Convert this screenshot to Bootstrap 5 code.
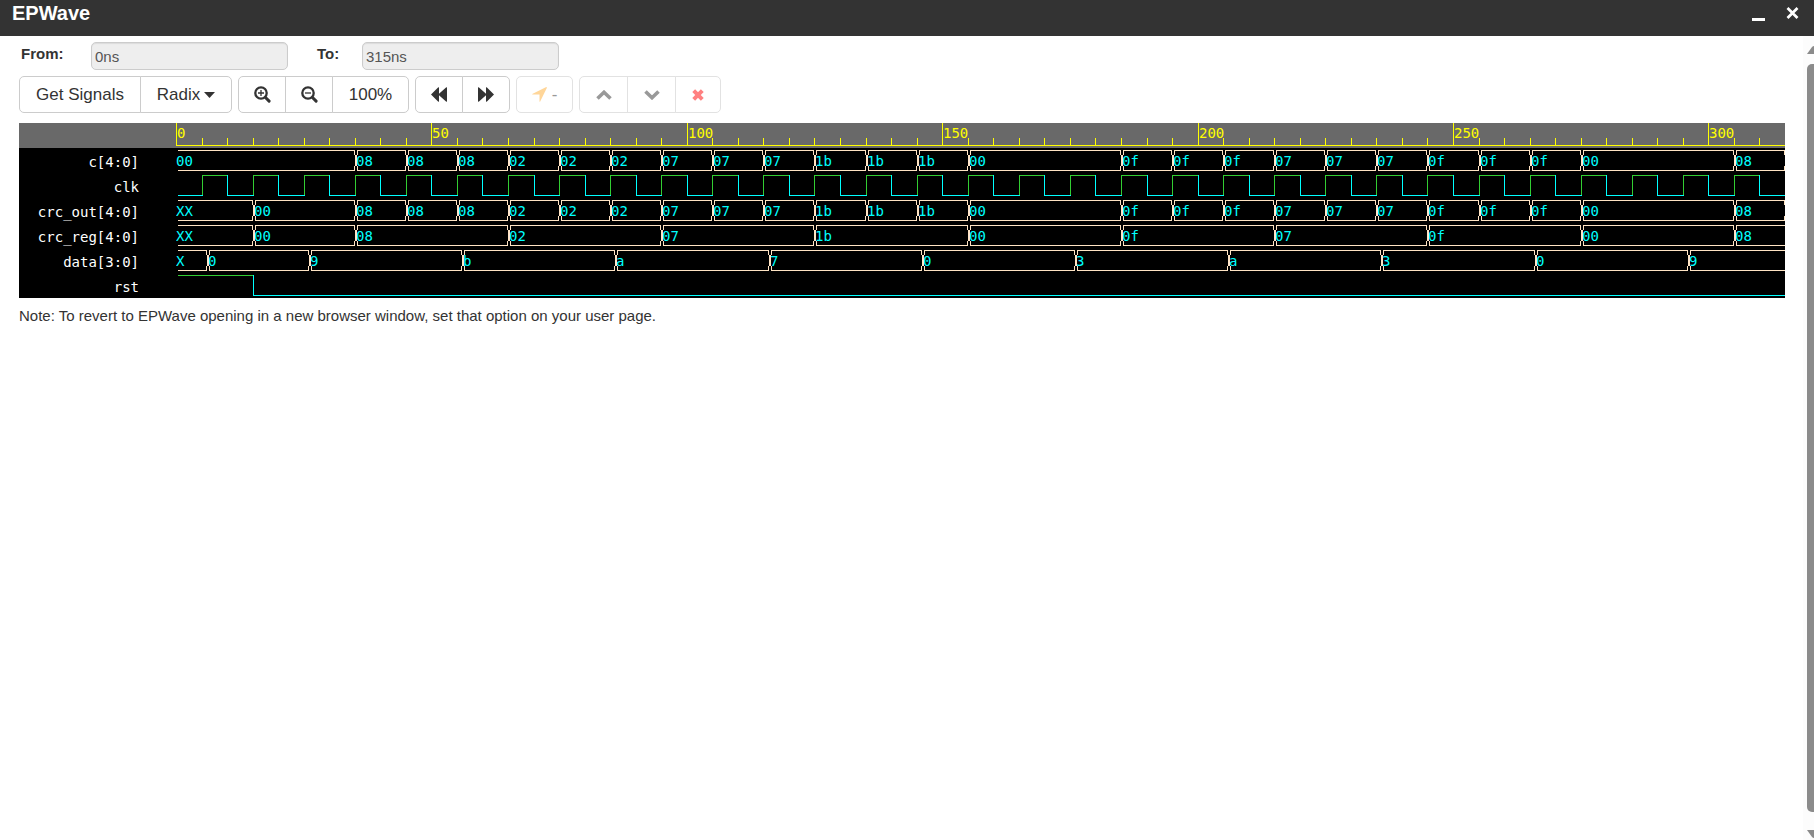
<!DOCTYPE html>
<html lang="en">
<head>
<meta charset="utf-8">
<meta name="viewport" content="width=device-width, initial-scale=1">
<title>EPWave</title>
<link href="https://cdn.jsdelivr.net/npm/bootstrap@5.3.0/dist/css/bootstrap.min.css" rel="stylesheet">
<style>
  body { font-family: "Liberation Sans", Arial, sans-serif; font-size: 15px; line-height: 20px; color: #333; background: #fff; }
  .title-bar { background: #333; color: #fff; height: 36px; padding: 0 15px 0 12px; }
  .title-bar h1 { font-size: 20px; font-weight: 700; line-height: 26px; margin: 0; }
  .title-bar button { background: none; border: 0; padding: 0; color: #fff; line-height: 0; }
  .viewer { padding: 6px 18px 0 19px; }
  .range-row { padding-left: 2px; height: 28px; }
  .range-row label { font-weight: 700; height: 24px; line-height: 24px; }
  .from-label { width: 70px; }
  .to-label { width: 45px; margin-left: 29px; }
  .time-box.form-control { width: 197px; height: 28px; padding: 0 3px; font-size: 15px; line-height: 20px; color: #555; background: #eee; border: 1px solid #ccc; border-radius: 5px; box-shadow: inset 0 1px 1px rgba(0,0,0,.08); }
  .tool-row { margin: 6px 0 10px; gap: 6px; }
  .tool-row .btn { height: 37px; padding: 0; font-size: 17px; line-height: 20px; color: #333; background: #fff; border: 1px solid #ccc; border-radius: 5px; display: inline-flex; align-items: center; justify-content: center; flex: none; }
  .tool-row .btn:disabled { color: #999; border-color: #e2e2e2; opacity: 1; }
  .w-signals { width: 122px; }
  .w-radix { width: 92px; gap: 4px; }
  .w-icon { width: 48px; }
  .w-zoom { width: 77px; }
  .w-mark { width: 57px; gap: 5px; }
  .w-move { width: 49px; }
  .w-remove { width: 46px; }
  .wave { background: #000; font-family: "DejaVu Sans Mono", monospace; font-size: 14px; }
  .wave-row { height: 25px; }
  .wave-row.ruler { background: #696969; }
  .wave-name { width: 157px; padding: 3px 37px 0 0; line-height: 22px; color: #fff; text-align: right; flex: none; }
  .wave-row svg { flex: 1 1 0; min-width: 0; height: 25px; display: block; overflow: hidden; }
  .wave path { fill: none; stroke-width: 1; shape-rendering: crispEdges; }
  .tick { stroke: #ff0; }
  .tick-text { fill: #ff0; }
  .bus { stroke: #ffe4c4; }
  .bus-text { fill: #0ff; }
  .high { stroke: #32cd32; }
  .low { stroke: #0ff; }
  .scroll-track { width: 11px; background: #fcfcfc; padding: 10px 0 2px 4px; overflow: hidden; }
  .scroll-track svg { display: block; flex: none; }
  .scroll-thumb { background: #8b8b8b; border-radius: 5px 0 0 5px; margin: 10px 0 18px; }
</style>
</head>
<body>
<div class="d-flex flex-column min-vh-100">
  <header class="title-bar d-flex justify-content-between">
    <h1>EPWave</h1>
    <div class="d-flex align-items-start gap-3">
      <button type="button" aria-label="Minimize"><svg width="18" height="26"><path d="M0 19.5h13" stroke="#fff" stroke-width="3"/></svg></button>
      <button type="button" aria-label="Close"><svg width="13" height="26"><path d="M1.500 8l10 10m0-10l-10 10" stroke="#fff" stroke-width="2.700"/></svg></button>
    </div>
  </header>
  <div class="d-flex flex-fill">
    <main class="viewer flex-fill">
      <form class="range-row d-flex">
        <label class="from-label" for="from">From:</label>
        <input class="form-control time-box" id="from" type="text" value="0ns" readonly>
        <label class="to-label" for="to">To:</label>
        <input class="form-control time-box" id="to" type="text" value="315ns" readonly>
      </form>
      <div class="tool-row d-flex flex-wrap">
        <div class="btn-group">
          <button type="button" class="btn w-signals">Get Signals</button>
          <button type="button" class="btn w-radix">Radix <svg width="11" height="6"><path d="M0 0h11L5.500 6z" fill="#333"/></svg></button>
        </div>
        <div class="btn-group">
          <button type="button" class="btn w-icon" aria-label="Zoom in"><svg width="17" height="17" fill="none" stroke="#333"><circle cx="7" cy="7" r="5.7" stroke-width="2.3"/><path d="M11.5 11.5l3.6 3.6" stroke-width="3" stroke-linecap="round"/><path d="M4 7h6M7 4v6" stroke-width="1.3"/></svg></button>
          <button type="button" class="btn w-icon" aria-label="Zoom out"><svg width="17" height="17" fill="none" stroke="#333"><circle cx="7" cy="7" r="5.7" stroke-width="2.3"/><path d="M11.5 11.5l3.6 3.6" stroke-width="3" stroke-linecap="round"/><path d="M4 7h6" stroke-width="1.3"/></svg></button>
          <button type="button" class="btn w-zoom">100%</button>
        </div>
        <div class="btn-group">
          <button type="button" class="btn w-icon" aria-label="Backward"><svg width="16" height="15" fill="#333"><path d="M0 7.5L7.3.3Q8 0 8 .7V6.8L15.3.3Q16 0 16 .7v13.6q0 .7-.7.4L8 8.2v6.1q0 .7-.7.4z"/></svg></button>
          <button type="button" class="btn w-icon" aria-label="Forward"><svg width="16" height="15" fill="#333"><path d="M16 7.5L8.7.3Q8 0 8 .7V6.8L.7.3Q0 0 0 .7v13.6q0 .7.7.4L8 8.2v6.1q0 .7.7.4z"/></svg></button>
        </div>
        <button type="button" class="btn w-mark" disabled><svg width="15" height="15" fill="#ffd699"><path d="M14.3.1q.8 0 .5.8L8.3 14.3q-.6 1-.8 0V7.5H.7q-1-.2 0-.8z"/></svg>-</button>
        <div class="btn-group">
          <button type="button" class="btn w-move" aria-label="Move up" disabled><svg width="16" height="10"><path d="M1.5 8.5L8 2.3l6.5 6.2" fill="none" stroke="#999" stroke-width="3.6"/></svg></button>
          <button type="button" class="btn w-move" aria-label="Move down" disabled><svg width="16" height="10"><path d="M1.5 1.5L8 7.7l6.5-6.2" fill="none" stroke="#999" stroke-width="3.6"/></svg></button>
          <button type="button" class="btn w-remove" aria-label="Remove" disabled><svg width="12" height="12"><path d="M1.7 1.7l8.6 8.6m0-8.6l-8.6 8.6" fill="none" stroke="#ff8080" stroke-width="4"/></svg></button>
        </div>
      </div>
      <div class="wave" id="wave"></div>
      <p class="mt-2 mb-0 pt-0">Note: To revert to EPWave opening in a new browser window, set that option on your user page.</p>
    </main>
    <div class="scroll-track d-flex flex-column" aria-hidden="true">
      <svg width="14" height="8"><path d="M0 8L5 1q2-2 4 0l5 7z" fill="#8b8b8b"/></svg>
      <div class="scroll-thumb flex-fill"></div>
      <svg width="14" height="8"><path d="M0 0L5 7q2 2 4 0l5-7z" fill="#8b8b8b"/></svg>
    </div>
  </div>
</div>
<script src="https://cdn.jsdelivr.net/npm/bootstrap@5.3.0/dist/js/bootstrap.bundle.min.js"></script>
<script>
  const END = 315;
  const crc = '35:08 45:08 55:08 65:02 75:02 85:02 95:07 105:07 115:07 125:1b 135:1b 145:1b 155:00 185:0f 195:0f 205:0f 215:07 225:07 235:07 245:0f 255:0f 265:0f 275:00 305:08 315:';
  const clk = Array.from({ length: 63 }, (_, i) => i * 5 + ':' + i % 2).join(' ');
  const signals = [
    { name: 'c[4:0]', bus: true, data: '0:00 ' + crc },
    { name: 'clk', data: clk },
    { name: 'crc_out[4:0]', bus: true, data: '0:XX 15:00 ' + crc },
    { name: 'crc_reg[4:0]', bus: true, data: '0:XX 15:00 35:08 65:02 95:07 125:1b 155:00 185:0f 215:07 245:0f 275:00 305:08' },
    { name: 'data[3:0]', bus: true, data: '0:X 6:0 26:9 56:b 86:a 116:7 146:0 176:3 206:a 236:3 266:0 296:9' },
    { name: 'rst', data: '0:1 15:0' }
  ];
  const wave = document.getElementById('wave');
  const row = (name, cls) => `<div class="wave-row d-flex ${cls}"><div class="wave-name">${name}</div><svg></svg></div>`;
  wave.innerHTML = row('', 'ruler') + signals.map(s => row(s.name, '')).join('');
  const plots = wave.querySelectorAll('svg');

  function drawRuler(svg, k) {
    let d = `M0 22.5H${END * k}`, text = '';
    for (let t = 0; t < END; t += 5) {
      const x = Math.round(t * k);
      d += `M${x + 0.5} ${t % 50 ? 15 : 0}V23`;
      if (t % 50 === 0) text += `<text class="tick-text" x="${x + 1}" y="15">${t}</text>`;
    }
    svg.innerHTML = `<path class="tick" d="${d}"/>${text}`;
  }

  function drawSignal(svg, signal, k) {
    const steps = signal.data.split(' ').map(s => s.split(':'));
    let bus = '', high = '', low = '', text = '';
    steps.forEach(([t, value], i) => {
      const last = i === steps.length - 1;
      const a = Math.round(t * k), b = Math.round((last ? END : steps[i + 1][0]) * k);
      if (signal.bus) {
        const right = last ? b + 9 : b;
        bus += `M${a + 2} 2.5H${right}M${a + 2} 22.5H${right}`;
        if (i) bus += `M${a + 2.5} 2V7M${a + 1.5} 7V18M${a + 2.5} 18V23`;
        if (!last) bus += `M${b - 0.5} 2V7M${b + 0.5} 7V18M${b - 0.5} 18V23`;
        text += `<text class="bus-text" x="${i ? a + 1 : 0}" y="18">${value}</text>`;
      } else {
        const up = value === '1', y = up ? 2.5 : 22.5;
        let d = `M${i ? a : 2} ${y}H${last ? b + 9 : b + 1}`;
        if (i) d += `M${a + 0.5} 2V23`;
        if (up) high += d; else low += d;
      }
    });
    svg.innerHTML = `<path class="bus" d="${bus}"/><path class="high" d="${high}"/><path class="low" d="${low}"/>${text}`;
  }

  function draw() {
    const k = plots[0].getBoundingClientRect().width / END;
    drawRuler(plots[0], k);
    signals.forEach((s, i) => drawSignal(plots[i + 1], s, k));
  }
  draw();
  window.addEventListener('resize', draw);
</script>
</body>
</html>
